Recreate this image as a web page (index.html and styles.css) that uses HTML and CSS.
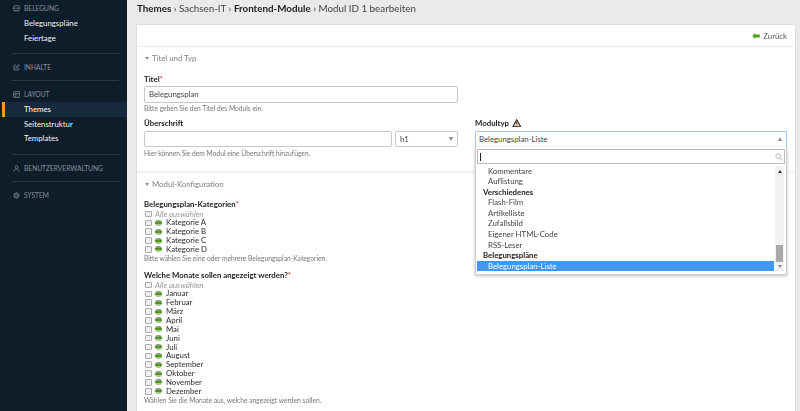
FILE: index.html
```html
<!DOCTYPE html>
<html lang="de">
    <head>
        <meta charset="UTF-8" />
        <title>Modul ID 1 bearbeiten</title>
        <link rel="stylesheet" href="styles.css">
    </head>
    <body>
        <nav class="sidebar">
            <div class="nav-group first">
                <h4><svg class="nav-icon" viewBox="0 0 10 10"><path d="M2 1h6a1 1 0 0 1 1 1v5a1 1 0 0 1-1 1H2a1 1 0 0 1-1-1V2a1 1 0 0 1 1-1zM1 4.500h8M3 8v1.500M7 8v1.500"/></svg>BELEGUNG</h4>
                <a href="#">Belegungspläne</a>
                <a href="#">Feiertage</a>
            </div>
            <div class="nav-group">
                <h4><svg class="nav-icon" viewBox="0 0 10 10"><path d="M8.500 5.500v3h-7v-7h3M4 6l.4-1.800L8 .8l1.200 1.200-3.400 3.600z"/></svg>INHALTE</h4>
            </div>
            <div class="nav-group">
                <h4><svg class="nav-icon" viewBox="0 0 10 10"><path d="M1 1h8v8H1zM1 4h8M4 4v5"/></svg>LAYOUT</h4>
                <a href="#" class="active">Themes</a>
                <a href="#">Seitenstruktur</a>
                <a href="#">Templates</a>
            </div>
            <div class="nav-group">
                <h4><svg class="nav-icon" viewBox="0 0 10 10"><path d="M5 1a2 2 0 1 1 0 4 2 2 0 0 1 0-4zM1 9.500c0-2.500 2-3.500 4-3.500s4 1 4 3.500"/></svg>BENUTZERVERWALTUNG</h4>
            </div>
            <div class="nav-group">
                <h4><svg class="nav-icon" viewBox="0 0 10 10"><circle cx="5" cy="5" r="1.500"/><circle cx="5" cy="5" r="3.500"/><path d="M5 .5v1M5 8.500v1M.5 5h1M8.500 5h1M1.800 1.800l.7.7M7.500 7.500l.7.7M8.200 1.800l-.7.7M2.500 7.500l-.7.7"/></svg>SYSTEM</h4>
            </div>
        </nav>

        <main class="main">
            <h1 class="crumbs"><b>Themes</b> › Sachsen-IT › <b>Frontend-Module</b> › Modul ID 1 bearbeiten</h1>

            <div class="card">
                <div class="toolbar">
                    <a href="#" class="back"><svg viewBox="0 0 10 8"><path d="M0 4l4-4v2h6v4H4v2z"/></svg>Zurück</a>
                </div>

                <section class="section">
                    <h2 class="legend">Titel und Typ</h2>
                    <div class="fields">
                        <div class="field">
                            <label>Titel<i>*</i></label>
                            <div class="input">Belegungsplan</div>
                            <p class="help">Bitte geben Sie den Titel des Moduls ein.</p>
                        </div>
                        <div></div>
                        <div class="field">
                            <label>Überschrift</label>
                            <div class="input-row">
                                <div class="input grow"></div>
                                <div class="input select">h1<span class="arrow down"></span></div>
                            </div>
                            <p class="help">Hier können Sie dem Modul eine Überschrift hinzufügen.</p>
                        </div>
                        <div class="field">
                            <label>Modultyp <svg class="warn" viewBox="0 0 12 11"><path d="M6 1l5 9H1z"/><path class="mark" d="M6 4v3M6 8v1"/></svg></label>
                            <div class="chosen">
                                <div class="input open">Belegungsplan-Liste<span class="arrow up"></span></div>
                                <div class="drop">
                                    <div class="search"><span class="caret"></span>
                                        <svg viewBox="0 0 10 10"><circle cx="4" cy="4" r="3"/><path d="M6.200 6.200L9.500 9.500"/></svg>
                                    </div>
                                    <div class="drop-body">
                                        <ul class="options">
                                            <li>Kommentare</li>
                                            <li>Auflistung</li>
                                            <li class="group">Verschiedenes</li>
                                            <li>Flash-Film</li>
                                            <li>Artikelliste</li>
                                            <li>Zufallsbild</li>
                                            <li>Eigener HTML-Code</li>
                                            <li>RSS-Leser</li>
                                            <li class="group">Belegungspläne</li>
                                            <li class="selected">Belegungsplan-Liste</li>
                                        </ul>
                                        <div class="scroll">
                                            <span class="arrow up small"></span>
                                            <div class="thumb"></div>
                                            <span class="arrow down small"></span>
                                        </div>
                                    </div>
                                </div>
                            </div>
                        </div>
                    </div>
                </section>

                <section class="section">
                    <h2 class="legend">Modul-Konfiguration</h2>
                    <div class="field checks">
                        <label>Belegungsplan-Kategorien<i>*</i></label>
                        <div class="check all"><span class="box"></span>Alle auswählen</div>
                        <div class="check"><span class="box"></span><span class="pill"></span>Kategorie A</div>
                        <div class="check"><span class="box"></span><span class="pill"></span>Kategorie B</div>
                        <div class="check"><span class="box"></span><span class="pill"></span>Kategorie C</div>
                        <div class="check"><span class="box"></span><span class="pill"></span>Kategorie D</div>
                        <p class="help">Bitte wählen Sie eine oder mehrere Belegungsplan-Kategorien.</p>
                    </div>
                    <div class="field checks">
                        <label>Welche Monate sollen angezeigt werden?<i>*</i></label>
                        <div class="check all"><span class="box"></span>Alle auswählen</div>
                        <div class="check"><span class="box"></span><span class="pill"></span>Januar</div>
                        <div class="check"><span class="box"></span><span class="pill"></span>Februar</div>
                        <div class="check"><span class="box"></span><span class="pill"></span>März</div>
                        <div class="check"><span class="box"></span><span class="pill"></span>April</div>
                        <div class="check"><span class="box"></span><span class="pill"></span>Mai</div>
                        <div class="check"><span class="box"></span><span class="pill"></span>Juni</div>
                        <div class="check"><span class="box"></span><span class="pill"></span>Juli</div>
                        <div class="check"><span class="box"></span><span class="pill"></span>August</div>
                        <div class="check"><span class="box"></span><span class="pill"></span>September</div>
                        <div class="check"><span class="box"></span><span class="pill"></span>Oktober</div>
                        <div class="check"><span class="box"></span><span class="pill"></span>November</div>
                        <div class="check"><span class="box"></span><span class="pill"></span>Dezember</div>
                        <p class="help">Wählen Sie die Monate aus, welche angezeigt werden sollen.</p>
                    </div>
                </section>
            </div>
        </main>
    </body>
</html>
```

FILE: styles.css
```css
html, body {
    height: 100%;
    overflow: hidden;
}
body {
    margin: 0;
    display: flex;
    background: #e9eaec;
    color: #222;
    font-family: Lato, "Liberation Sans", sans-serif;
    font-size: 7.8px;
    filter: blur(0.4px);
}

/* sidebar */
.sidebar {
    width: 127px;
    flex-shrink: 0;
    background: #0f1c2a;
    color: #fff;
}
.nav-group {
    margin: 0 8px 0 11px;
    padding: 8.5px 0;
    border-bottom: 1px solid #2b3744;
}
.nav-group:last-child {
    border-bottom: none;
}
.nav-group.first {
    padding-top: 3.5px;
    padding-bottom: 8px;
}
.nav-group h4 {
    margin: 0;
    padding-left: 2px;
    display: flex;
    align-items: center;
    gap: 4px;
    height: 9px;
    color: #87929c;
    font-size: 6.65px;
    font-weight: 400;
}
.nav-icon {
    width: 7px;
    height: 7px;
    fill: none;
    stroke: #87929c;
    stroke-width: 1;
}
.nav-group a {
    display: block;
    height: 14.5px;
    line-height: 14.5px;
    margin: 0 -8px 0 -11px;
    padding-left: 24px;
    color: #f2f4f6;
    text-decoration: none;
}
.nav-group h4 + a {
    margin-top: 3.5px;
}
.nav-group a.active {
    margin-left: -9px;
    padding-left: 19px;
    background: #16293d;
    border-left: 3px solid #f59a23;
    color: #fff;
}

/* content */
.main {
    flex: 1;
    min-width: 0;
    padding: 0 4px 0 9px;
}
.crumbs {
    margin: 0;
    height: 24px;
    padding: 2px 0 0 1px;
    box-sizing: border-box;
    font-size: 9.8px;
    line-height: 13px;
    font-weight: 400;
    color: #444;
}
.crumbs b {
    color: #222;
}
.card {
    background: #fff;
    border: 1px solid #dcdde0;
    border-radius: 1px;
}
.toolbar {
    height: 21px;
    padding-right: 8px;
    border-bottom: 1px solid #ececee;
    display: flex;
    justify-content: flex-end;
    align-items: center;
}
.back {
    display: flex;
    align-items: center;
    gap: 3px;
    color: #555;
    text-decoration: none;
}
.back svg {
    width: 8px;
    height: 6px;
    fill: #4f9e1f;
}

.section {
    padding: 5px 8px 8px 7px;
    border-bottom: 2px solid #f3f3f4;
}
.legend {
    margin: 0 0 9.5px 0;
    padding-left: 8px;
    height: 12px;
    line-height: 12px;
    font-size: 7.8px;
    font-weight: 400;
    color: #7a7f85;
    position: relative;
}
.legend::before {
    content: "";
    position: absolute;
    left: 1px;
    top: 5px;
    border: 2px solid transparent;
    border-top: 3px solid #8a8f94;
    border-bottom: none;
}
.fields {
    display: grid;
    grid-template-columns: 314px 312px;
    column-gap: 17px;
}
.field label {
    display: block;
    height: 10px;
    line-height: 10px;
    font-weight: 700;
    color: #222;
}
.field label i {
    color: #c33;
    font-style: normal;
    font-weight: 400;
}
.input {
    height: 16.5px;
    line-height: 14.5px;
    box-sizing: border-box;
    border: 1px solid #c8c8c8;
    border-radius: 2px;
    padding: 0 4px;
    margin-top: 2.5px;
    color: #444;
    background: #fff;
    position: relative;
}
.input-row {
    display: flex;
    gap: 3px;
}
.input.grow {
    flex: 1;
}
.input.select {
    width: 63px;
}
.arrow {
    position: absolute;
    right: 4px;
    top: 5px;
    border: 2.5px solid transparent;
}
.arrow.down {
    border-top: 4px solid #888;
    border-bottom: none;
}
.arrow.up {
    border-bottom: 4px solid #888;
    border-top: none;
}
.help {
    margin: 1.5px 0 5px 0;
    height: 9px;
    line-height: 9px;
    font-size: 6.7px;
    color: #777;
}

/* dropdown, lies over the next section */
.chosen {
    position: relative;
}
.input.open {
    padding-left: 3px;
    border-color: #9cc4ee;
    border-bottom: none;
    border-radius: 2px 2px 0 0;
}
.drop {
    position: absolute;
    left: 0;
    right: 0;
    top: 16.5px;
    z-index: 2;
    background: #fff;
    border: 1px solid #ccc;
    border-top: none;
    box-shadow: 0 1px 3px rgba(0, 0, 0, 0.25);
    padding: 1.5px 1px 2.5px 1px;
}
.search {
    height: 15px;
    box-sizing: border-box;
    border: 1px solid #bbb;
    position: relative;
    margin-bottom: 2.2px;
}
.caret {
    position: absolute;
    left: 2px;
    top: 3px;
    width: 1px;
    height: 8px;
    background: #222;
}
.search svg {
    position: absolute;
    right: 1px;
    top: 3px;
    width: 8px;
    height: 8px;
    fill: none;
    stroke: #aaa;
    stroke-width: 1;
}
.drop-body {
    display: flex;
}
.options {
    list-style: none;
    margin: 0;
    padding: 0;
    flex: 1;
}
.options li {
    height: 10.55px;
    line-height: 10.55px;
    padding-left: 11px;
    color: #444;
}
.options li.group {
    padding-left: 6px;
    font-weight: 700;
    color: #222;
}
.options li.selected {
    background: #3f97f6;
    color: #fff;
}
.scroll {
    width: 9px;
    margin: 0 1px;
    background: #f1f1f1;
    position: relative;
    display: flex;
    flex-direction: column;
    justify-content: flex-end;
}
.arrow.small {
    right: 2.5px;
    border-width: 2px;
}
.arrow.small.up {
    top: 4px;
    border-bottom: 3px solid #333;
    border-top: none;
}
.arrow.small.down {
    top: auto;
    bottom: 3px;
    border-top: 3px solid #888;
    border-bottom: none;
}
.thumb {
    height: 17px;
    margin: 0 1px 9px 1px;
    background: #aaa;
}

.warn {
    width: 9.5px;
    height: 8.5px;
    margin-left: 1.5px;
    vertical-align: -1px;
    fill: #f8e6c4;
    stroke: #222;
    stroke-width: 1.4;
}
.warn .mark {
    stroke: #7a3d0c;
}

/* checkbox lists */
.checks .help {
    margin: 0.6px 0 6.5px 0;
}
.checks label {
    margin-bottom: 0.6px;
}
.check {
    display: flex;
    align-items: center;
    height: 8.86px;
    line-height: 8.86px;
    color: #2b2b2b;
}
.check.all {
    color: #999;
    font-style: italic;
}
.check.all .box {
    margin-right: 3.5px;
}
.box {
    box-sizing: border-box;
    width: 6.5px;
    height: 6.5px;
    margin: 0 3.5px 0 1px;
    border: 1px solid #aaa;
    border-radius: 1px;
    background: #f0f0f0;
}
.pill {
    width: 7px;
    height: 6px;
    margin-right: 4px;
    border-radius: 3px;
    background: linear-gradient(#8d9a85 0 33%, #4f9a18 33% 66%, #a8c893 66%);
}
```
